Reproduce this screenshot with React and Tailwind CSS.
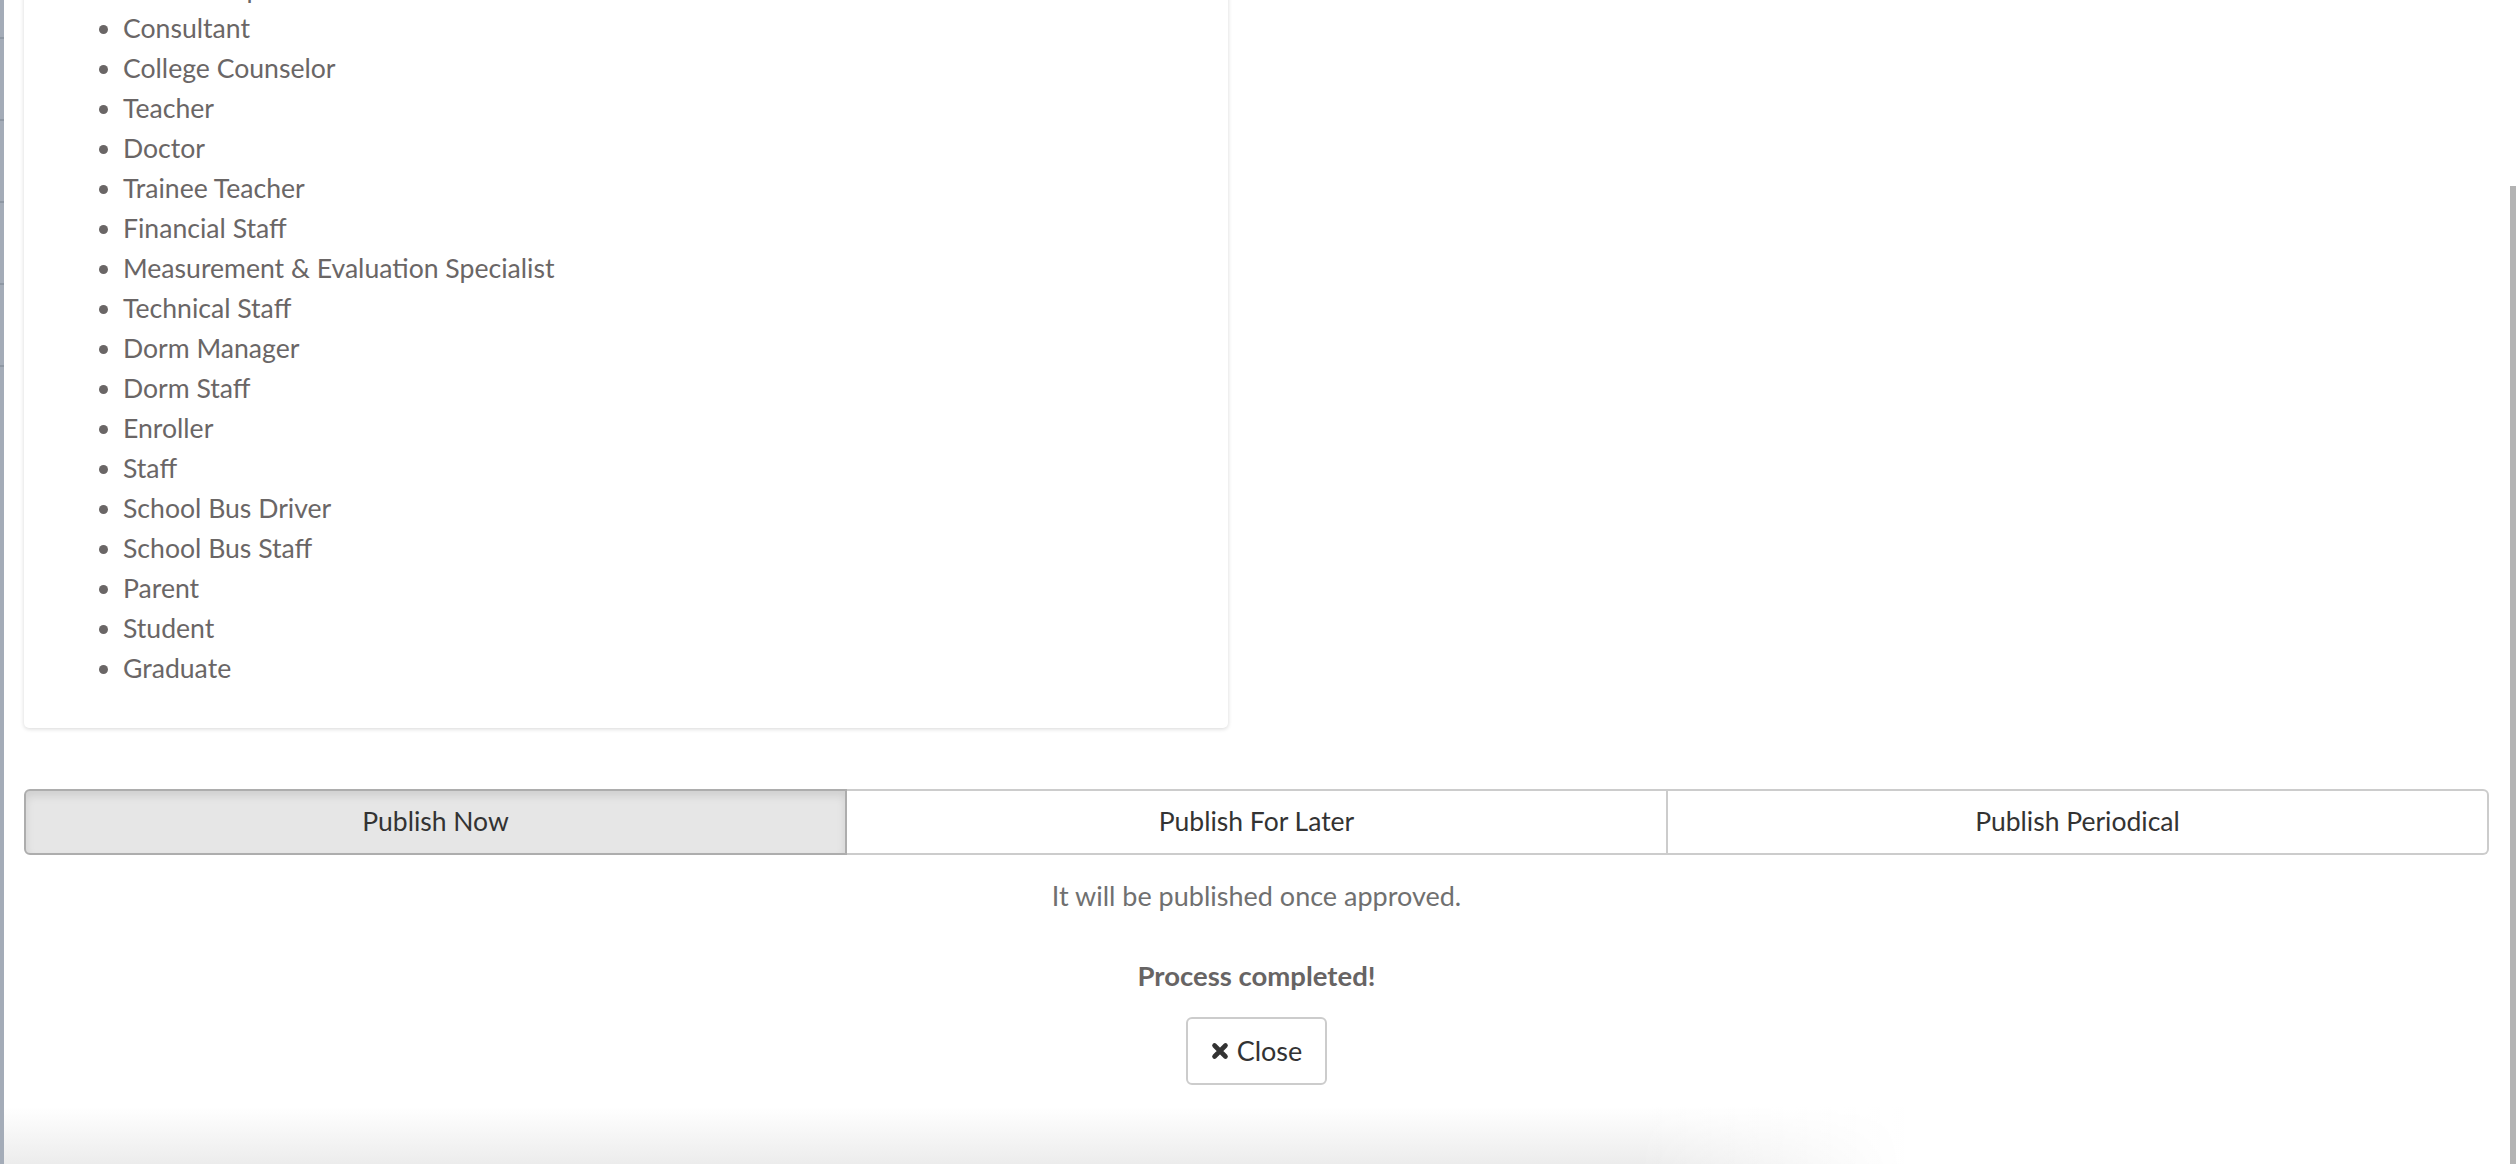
import React from "react";

const items = [
  "Vice Principal",
  "Consultant",
  "College Counselor",
  "Teacher",
  "Doctor",
  "Trainee Teacher",
  "Financial Staff",
  "Measurement & Evaluation Specialist",
  "Technical Staff",
  "Dorm Manager",
  "Dorm Staff",
  "Enroller",
  "Staff",
  "School Bus Driver",
  "School Bus Staff",
  "Parent",
  "Student",
  "Graduate",
];

function TimesIcon() {
  return (
    <svg width="18" height="18" viewBox="0 0 18 18" className="shrink-0">
      <path d="M3.5 3.5 L14.5 14.5 M14.5 3.5 L3.5 14.5" stroke="#333" strokeWidth="4.6" strokeLinecap="round" fill="none" />
    </svg>
  );
}

export default function App() {
  return (
    <div
      className="relative w-[2516px] h-[1164px] overflow-hidden flex bg-white"
      style={{ fontFamily: "Lato, 'Noto Sans', sans-serif" }}
    >
      {/* left page strip */}
      <div className="w-[4px] shrink-0 bg-[#a4acb8] flex flex-col">
        <div className="h-[37px]" />
        <div className="h-[2px] bg-[#8f98a4]" />
        <div className="h-[80px]" />
        <div className="h-[2px] bg-[#8f98a4]" />
        <div className="h-[80px]" />
        <div className="h-[2px] bg-[#8f98a4]" />
        <div className="h-[80px]" />
        <div className="h-[2px] bg-[#8f98a4]" />
        <div className="h-[80px]" />
        <div className="h-[2px] bg-[#8f98a4]" />
        <div className="flex-1" />
      </div>

      <div className="flex-1 flex flex-col pl-[20px] pr-[27px]">
        {/* card with list */}
        <div className="-mt-[52px] w-[1204px] bg-white rounded-[5px] shadow-[0_1px_4px_rgba(0,0,0,0.16)] pt-[20px] pb-[40px]">
          <ul className="list-disc pl-[99px] text-[#6a6666] text-[26.6px] leading-[40px] marker:text-[#6a6666]">
            {items.map((t) => (
              <li key={t} className="pl-0">{t}</li>
            ))}
          </ul>
        </div>

        {/* publish options */}
        <div className="mt-[61px] flex h-[69px] text-[26.5px] text-[#333]">
          <div className="flex-1 flex items-center justify-center bg-[#e6e6e6] border-2 border-[#adadad] rounded-l-[6px] shadow-[inset_0_5px_8px_rgba(0,0,0,0.1)]">
            Publish Now
          </div>
          <div className="flex-1 flex items-center justify-center bg-white border-y-2 border-r-2 border-[#cccccc]">
            Publish For Later
          </div>
          <div className="flex-1 flex items-center justify-center bg-white border-y-2 border-r-2 border-[#cccccc] rounded-r-[6px]">
            Publish Periodical
          </div>
        </div>

        <div className="mt-[23px] text-center text-[27px] leading-[36px] text-[#707070]">
          It will be published once approved.
        </div>

        <div className="mt-[44px] text-center text-[27.5px] leading-[36px] font-bold text-[#676464]">
          Process completed!
        </div>

        <div className="mt-[23px] flex justify-center">
          <div className="w-[141px] h-[68px] flex items-center justify-center gap-[8px] border-2 border-[#cccccc] rounded-[6px] bg-white text-[27px] text-[#333]">
            <TimesIcon />
            <span>Close</span>
          </div>
        </div>

        <div className="mt-[22px] h-[60px] w-[1900px] -ml-[20px] bg-[linear-gradient(to_right,rgba(255,255,255,0)_86%,#fff),linear-gradient(to_bottom,#fff,#ececec)]" />
      </div>

      {/* scrollbar thumb */}
      <div className="absolute right-0 top-[186px] w-[6px] h-[978px] bg-[#b3b3b3]" />
    </div>
  );
}
